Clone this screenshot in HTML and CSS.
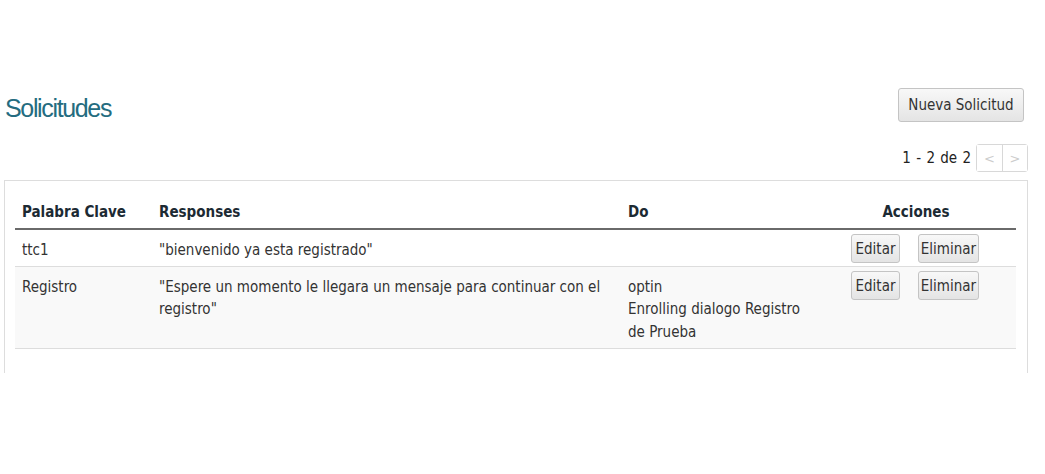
FILE: index.html
```html
<!DOCTYPE html>
<html lang="es">
<head>
<meta charset="utf-8">
<title>Solicitudes</title>
<link rel="stylesheet" href="styles.css">
</head>
<body>
<div class="page">
  <div class="header">
    <h1 class="title">Solicitudes</h1>
    <button class="btn btn-new">Nueva Solicitud</button>
  </div>
  <div class="pager">
    <span class="pager-text">1 - 2 de 2</span>
    <div class="pager-group">
      <button class="pager-btn">&lt;</button>
      <button class="pager-btn">&gt;</button>
    </div>
  </div>
  <div class="panel">
    <table class="grid">
      <colgroup>
        <col class="c1"><col class="c2"><col class="c3"><col class="c4">
      </colgroup>
      <thead>
        <tr>
          <th>Palabra Clave</th>
          <th>Responses</th>
          <th>Do</th>
          <th class="center">Acciones</th>
        </tr>
      </thead>
      <tbody>
        <tr>
          <td>ttc1</td>
          <td>"bienvenido ya esta registrado"</td>
          <td></td>
          <td class="actions"><div class="act"><button class="btn btn-sm btn-edit">Editar</button><button class="btn btn-sm btn-del">Eliminar</button></div></td>
        </tr>
        <tr class="alt">
          <td>Registro</td>
          <td>"Espere un momento le llegara un mensaje para continuar con el registro"</td>
          <td>optin<br>Enrolling dialogo Registro de Prueba</td>
          <td class="actions"><div class="act"><button class="btn btn-sm btn-edit">Editar</button><button class="btn btn-sm btn-del">Eliminar</button></div></td>
        </tr>
      </tbody>
    </table>
  </div>
</div>
</body>
</html>
```

FILE: styles.css
```css
html, body {
  margin: 0;
  padding: 0;
  background: #ffffff;
}
body {
  font-family: "DejaVu Sans Condensed", "DejaVu Sans", sans-serif;
  font-size: 15px;
  color: #333333;
}
.page {
  width: 1024px;
  margin-left: 4px;
  padding-top: 88px;
}
.header {
  display: flex;
  justify-content: space-between;
  align-items: flex-start;
}
.title {
  margin: 5px 0 0 1px;
  font-family: "Liberation Sans", Arial, sans-serif;
  font-weight: normal;
  font-size: 25px;
  letter-spacing: -1.35px;
  line-height: 30px;
  color: #246c80;
}
.btn {
  font-family: "DejaVu Sans Condensed", "DejaVu Sans", sans-serif;
  font-size: 15px;
  color: #333333;
  background: linear-gradient(#f8f8f8, #e4e4e4);
  border: 1px solid #c4c4c4;
  border-radius: 3px;
  padding: 0;
  cursor: pointer;
}
.btn-new {
  width: 126px;
  height: 34px;
  margin-right: 4px;
}
.pager {
  display: flex;
  justify-content: flex-end;
  align-items: center;
  margin-top: 21px;
  height: 28px;
}
.pager-text {
  color: #222;
  margin-right: 5px;
  word-spacing: 1px;
}
.pager-group {
  display: flex;
  border: 1px solid #d8d8d8;
  border-radius: 3px;
  height: 26px;
}
.pager-btn {
  width: 25px;
  height: 26px;
  border: 0;
  background: #ffffff;
  color: #cccccc;
  font-family: "DejaVu Sans", sans-serif;
  font-size: 13px;
  padding: 0;
}
.pager-btn + .pager-btn {
  border-left: 1px solid #d8d8d8;
}
.panel {
  margin-top: 8px;
  border: 1px solid #dddddd;
  border-bottom: 0;
  height: 193px;
  padding: 13px 10px 0 10px;
  box-sizing: border-box;
}
.grid {
  width: 1001px;
  border-collapse: collapse;
  table-layout: fixed;
}
.c1 { width: 137px; }
.c2 { width: 469px; }
.c3 { width: 195px; }
.c4 { width: 200px; }
.grid th {
  text-align: left;
  font-weight: bold;
  color: #1c2a33;
  padding: 7px 7px 5px 7px;
  line-height: 22px;
  border-bottom: 2px solid #6a6a6a;
}
.grid th.center {
  text-align: center;
}
.grid td {
  vertical-align: top;
  padding: 8.5px 7px 5px 7px;
  line-height: 22.5px;
  border-bottom: 1px solid #dddddd;
}
.grid tr.alt td {
  background: #f9f9f9;
}
.grid td.actions {
  padding: 4px 7px 0 7px;
}
.act {
  display: flex;
  justify-content: center;
  gap: 18px;
  padding-right: 2px;
}
.btn-sm {
  height: 29px;
  padding: 0;
}
.btn-edit { width: 49px; }
.btn-del { width: 61px; }
```
